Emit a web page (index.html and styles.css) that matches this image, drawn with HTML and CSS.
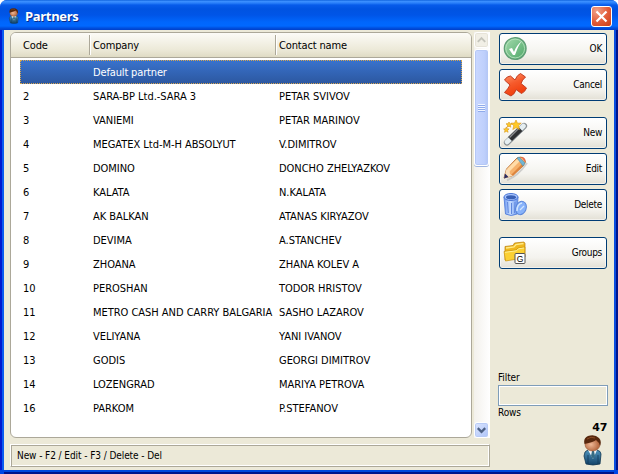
FILE: index.html
```html
<!DOCTYPE html>
<html lang="en">
<head>
<meta charset="utf-8">
<title>Partners</title>
<link rel="stylesheet" href="styles.css">
</head>
<body>
<svg width="0" height="0" class="defs">
  <defs>
    <linearGradient id="suit" x2="0" y2="1"><stop stop-color="#4f94bd"/><stop offset="1" stop-color="#124268"/></linearGradient>
    <radialGradient id="skin" cx=".4" cy=".5"><stop stop-color="#efb896"/><stop offset="1" stop-color="#b96d45"/></radialGradient>
    <symbol id="person" viewBox="0 0 22 31">
      <path d="M3 17 Q5 15 7 15 L15 15 Q19 16 19 19 L18 29 Q11 31 4 29 L2 21Z" fill="url(#suit)" stroke="#123650" stroke-width=".8"/>
      <path d="M6 15 L11 24 L15 15Z" fill="#f4f6f7"/>
      <path d="M10 16h2l1 5-2 3-2-3Z" fill="#356b84"/>
      <path d="M6 20v9M16 20v9" stroke="#0d3554" stroke-width=".7"/>
      <ellipse cx="10.5" cy="9.500" rx="7.500" ry="6.5" fill="url(#skin)" stroke="#8d4d2d" stroke-width=".5"/>
      <path d="M2.500 9 Q1 3 6 1 Q13 -1 17 3 Q20 6 18 11 Q17 7 14 5 Q12 7 2.500 9Z" fill="#57270d"/>
      <path d="M5 4 Q9 1 13 3" stroke="#8b4b24" fill="none"/>
    </symbol>
  </defs>
</svg>
<main class="window">
  <header class="titlebar">
    <svg class="app-icon" preserveAspectRatio="none"><use href="#person"/></svg>
    <h1>Partners</h1>
    <button class="close" aria-label="Close"><svg viewBox="0 0 19 19"><path d="M4.500 4.500l10 10M14.500 4.500l-10 10" stroke="#fff" stroke-width="2.2"/></svg></button>
  </header>
  <div class="client">
    <section class="left">
      <div class="list">
        <div class="table">
          <div class="row head"><span>Code</span><span>Company</span><span>Contact name</span></div>
          <div class="row selected"><span></span><span>Default partner</span><span></span></div>
          <div class="row"><span>2</span><span>SARA-BP Ltd.-SARA 3</span><span>PETAR SVIVOV</span></div>
          <div class="row"><span>3</span><span>VANIEMI</span><span>PETAR MARINOV</span></div>
          <div class="row"><span>4</span><span>MEGATEX Ltd-M-H ABSOLYUT</span><span>V.DIMITROV</span></div>
          <div class="row"><span>5</span><span>DOMINO</span><span>DONCHO ZHELYAZKOV</span></div>
          <div class="row"><span>6</span><span>KALATA</span><span>N.KALATA</span></div>
          <div class="row"><span>7</span><span>AK BALKAN</span><span>ATANAS KIRYAZOV</span></div>
          <div class="row"><span>8</span><span>DEVIMA</span><span>A.STANCHEV</span></div>
          <div class="row"><span>9</span><span>ZHOANA</span><span>ZHANA KOLEV A</span></div>
          <div class="row"><span>10</span><span>PEROSHAN</span><span>TODOR HRISTOV</span></div>
          <div class="row"><span>11</span><span>METRO CASH AND CARRY BALGARIA</span><span>SASHO LAZAROV</span></div>
          <div class="row"><span>12</span><span>VELIYANA</span><span>YANI IVANOV</span></div>
          <div class="row"><span>13</span><span>GODIS</span><span>GEORGI DIMITROV</span></div>
          <div class="row"><span>14</span><span>LOZENGRAD</span><span>MARIYA PETROVA</span></div>
          <div class="row"><span>16</span><span>PARKOM</span><span>P.STEFANOV</span></div>
        </div>
        <div class="scrollbar">
          <div class="arrow disabled"><svg viewBox="0 0 14 14"><path d="M3 9l4-4 4 4" fill="none" stroke="#c4c4bb" stroke-width="2"/></svg></div>
          <div class="thumb"><i></i></div>
          <div class="arrow down"><svg viewBox="0 0 14 14"><path d="M3 5l4 4 4-4" fill="none" stroke="#4d6185" stroke-width="2.4"/></svg></div>
        </div>
      </div>
      <footer class="status">New - F2 / Edit - F3 / Delete - Del</footer>
    </section>
    <aside class="side">
      <button class="action">
        <svg viewBox="0 0 26 26">
          <defs><linearGradient id="ok" x2="1" y2="1"><stop stop-color="#a6dcae"/><stop offset="1" stop-color="#4ba566"/></linearGradient></defs>
          <circle cx="12.2" cy="12.500" r="10.9" fill="url(#ok)" stroke="#5f9d76" stroke-width="1.2"/>
          <circle cx="12.2" cy="12.500" r="9.4" fill="none" stroke="#b9e5bf" stroke-width=".8"/>
          <path d="M6 13l3-1 2 4c2-5 4-8 8-11-4 5-5 9-7 14h-2Z" fill="#fff"/>
        </svg><span>OK</span></button>
      <button class="action">
        <svg viewBox="0 0 26 26">
          <defs><linearGradient id="no" x2=".4" y2="1"><stop stop-color="#ff9a70"/><stop offset=".5" stop-color="#f65b2c"/><stop offset="1" stop-color="#f03c0b"/></linearGradient></defs>
          <path d="M1.500 8Q4 4 7.500 4L12 8Q14 3 17.500 1.500L22.500 5Q19 8 18 11.500L23.500 16Q22 20 18.500 21.500L13 17.500Q12 22 8 24L1.500 20.500Q5 17 7 13Z" fill="url(#no)" stroke="#c23e22" stroke-width="1" stroke-linejoin="round"/>
        </svg><span>Cancel</span></button>
      <button class="action gap">
        <svg viewBox="0 0 26 26">
          <path d="M4 22.500L21 6" stroke="#8a9094" stroke-width="6.2" stroke-linecap="round"/>
          <path d="M4 22L20.500 6" stroke="#e5eef1" stroke-width="4.6" stroke-linecap="round"/>
          <path d="M7 19L17.500 9" stroke="#2e3032" stroke-width="5.6"/>
          <path d="M6.500 17.500l9-9" stroke="#8b8d90" stroke-width="1.4"/>
          <g fill="#ffc928" stroke="#d99515" stroke-width=".6"><path d="M13 0l1.5 3.2 3.7-.1-2.7 2.6 1 3.8-3.4-1.9-3.3 2 1-3.9L8 3.2l3.5-.1Z"/><path d="M6 2l.9 1.7 2 .2-1.5 1.3.4 2L6 6.2l-1.8 1 .4-2L3 3.8l2-.1Z"/><path d="M3.3 7l.8 1.8 2 .1-1.5 1.4.5 2-1.8-1-1.8 1 .5-2L.6 9l1.9-.2Z"/></g>
        </svg><span>New</span></button>
      <button class="action">
        <svg viewBox="0 0 26 26">
          <path d="M4 24Q14 21 24 7" stroke="#aaa" stroke-width="2" fill="none" opacity=".5"/>
          <path d="M1 22L3.500 13 14 2Q21-1 22.500 6L20 10 9 20Z" fill="#f6b16b" stroke="#b86b2d" stroke-width=".9"/>
          <path d="M4 13L14 3l3 2L6 16Z" fill="#ffdca9"/>
          <path d="M8 19L19 8l2 1L10 20Z" fill="#dd853f"/>
          <path d="M14 2l2-1 6 6-2 3Z" fill="#6fb6d7" stroke="#4f8ead" stroke-width=".5"/>
          <path d="M18.500 1Q21.500 1 22.500 4L22 6Z" fill="#e96950"/>
          <path d="M1 22l2.500-9 3 2 .5 3 3 2Z" fill="#f9dfbd"/>
          <path d="M1 22.500l1-5 3.500 3.500Z" fill="#292b62"/>
        </svg><span>Edit</span></button>
      <button class="action">
        <svg viewBox="0 0 26 26">
          <defs><linearGradient id="bin"><stop stop-color="#6d98f0"/><stop offset=".45" stop-color="#c4dbff"/><stop offset="1" stop-color="#6492ec"/></linearGradient></defs>
          <path d="M1 5l1.500 17Q8 25 14 22l1-17Z" fill="url(#bin)" stroke="#5d86dc"/>
          <path d="M4.500 10l.8 11M8.500 11v11M12 10L11.500 21" stroke="#6088de"/>
          <ellipse cx="8" cy="5" rx="7" ry="3.500" fill="#a9c6ff" stroke="#4b76d5"/>
          <ellipse cx="8" cy="5.200" rx="5" ry="2" fill="#3960b5"/>
          <ellipse cx="18" cy="16" rx="5.200" ry="6.800" transform="rotate(20 18 16)" fill="#87b2fa" stroke="#5b86d9"/>
          <path d="M14 19q0-7 5-8" stroke="#d1e5ff" stroke-width="1.500" fill="none"/><path d="M17 18l4-4" stroke="#d1e5ff" stroke-width="1.200"/>
        </svg><span>Delete</span></button>
      <button class="action gap">
        <svg viewBox="0 0 26 26">
          <path d="M2 6.500L10 5.500l1.500-2.500L21 2l1 1.500V17L2 20Z" fill="#f0b81d" stroke="#b87d09" stroke-width=".7"/>
          <path d="M3 8l8-1 2-2.500 7.500-1" stroke="#ffeb88" stroke-width="1.300" fill="none"/>
          <path d="M1 11.500l12-1.500 2-2 7-1-.5 11L2.500 21Z" fill="#fbd034" stroke="#c8920f" stroke-width=".7"/>
          <path d="M2 12.300l11.500-1.500 2-2 5.500-.8" stroke="#fff097" fill="none"/>
          <rect x="12" y="13.500" width="10" height="10" rx="1" fill="#fff" stroke="#555"/>
          <text x="17" y="21.500" text-anchor="middle" class="g">G</text>
        </svg><span>Groups</span></button>
      <div class="filter">
        <label for="f">Filter</label>
        <input id="f">
        <div class="rows">Rows</div>
        <b>47</b>
        <svg class="user"><use href="#person"/></svg>
      </div>
    </aside>
  </div>
</main>
</body>
</html>
```
FILE: styles.css
```css
* { box-sizing: border-box; }
body { margin: 0; background: #fff; font: 11px/14px "DejaVu Sans Condensed", "DejaVu Sans", sans-serif; color: #000; }
button { font: inherit; color: inherit; }
.defs { position: absolute; }
.window { width: 618px; height: 474px; display: flex; flex-direction: column; border-radius: 7px 7px 0 0; overflow: hidden; background: #0046e5; }
.titlebar { height: 30px; flex: none; display: flex; align-items: center; padding: 2px 6px 0 8px; background: linear-gradient(#0053d4 0, #3f93ff 1px, #2a80fa 3px, #075bea 5px, #0053e1 9px, #0055e7 15px, #0066fc 22px, #0068ff 26px, #0050df 28px, #003fc9 30px); }
.app-icon { width: 12px; height: 16px; margin-top: -1px; }
h1 { font: bold 13px/18px "Open Sans", "Noto Sans", sans-serif; letter-spacing: -.35px; margin: 0 auto 0 5px; color: #fff; text-shadow: 1px 1px 0 #0a2d8d; }
.close { width: 21px; height: 21px; padding: 0; border: 1px solid #fff; border-radius: 3px; background: radial-gradient(circle at 25% 20%, #f0a188, #e25b37 55%, #c83e18); }
.close svg { display: block; width: 19px; height: 19px; }
.client { flex: 1; display: flex; gap: 8px; padding: 2px 6px 3px 6px; margin: 0 4px 4px; background: #ece9d8; box-shadow: -2px 0 #0b5bf0, 2px 0 #0b4cde, -4px 0 #0019cf, 4px 0 #00138c, 0 2px #0046dc, 0 4px #00138c; }
.left { width: 480px; display: flex; flex-direction: column; gap: 6px; }
.list { height: 406px; display: flex; gap: 2px; }
.table { width: 462px; border: 1px solid #aca899; border-radius: 6px; background: #fff; overflow: hidden; }
.row { height: 24px; display: grid; grid-template-columns: 69px 186px 1fr; align-items: center; margin: 0 9px; white-space: nowrap; letter-spacing: -.03px; }
.row span { padding: 2px 0 0 4px; }
.row span:first-child { padding-left: 3px; }
.head { height: 25px; margin: 0 0 2px; padding-left: 9px; border-bottom: 1px solid #aca899; background: linear-gradient(#fcfbf7, #ece9d8 70%, #dfdbc4); letter-spacing: -.15px; }
.head span { height: 20px; line-height: 20px; border-left: 1px solid #aca899; box-shadow: inset 1px 0 #fff; padding: 1px 0 0 3px; }
.head span:first-child { border: 0; box-shadow: none; }
.selected { color: #fff; background: linear-gradient(#3973ce, #2c579f); outline: 1px dotted #d6a550; outline-offset: -1px; letter-spacing: -.15px; }
.scrollbar { width: 16px; display: flex; flex-direction: column; gap: 1px; background: linear-gradient(90deg, #f3f1ec, #fff); }
.arrow { width: 15px; height: 16px; border: 1px solid #fff; border-radius: 3px; background: linear-gradient(135deg, #dce6ff, #aec4f8); box-shadow: inset 0 0 0 1px #b8cbf6; flex: none; }
.arrow svg { display: block; width: 13px; height: 14px; }
.disabled { background: #f1efe6; box-shadow: inset 0 0 0 1px #e6e3d9; }
.thumb { width: 15px; height: 117px; display: grid; place-items: center; border: 1px solid #fff; border-radius: 3px; background: linear-gradient(90deg, #cad8ff, #bfd0fc 70%, #b3c6f6); box-shadow: inset 0 0 0 1px #b5c8f6, 0 1px #a0b5e0; }
.thumb i { width: 7px; height: 8px; background: repeating-linear-gradient(#f2f6ff 0 1px, #8fabeb 1px 2px); }
.down { margin-top: auto; }
.status { height: 23px; padding: 3px 6px; line-height: 16px; font-size: 10px; letter-spacing: -.08px; border: 1px solid #fff; border-right-color: #aca899; border-bottom-color: #aca899; box-shadow: inset 1px 1px #aca899, inset -1px -1px #fff; }
.side { width: 111px; display: flex; flex-direction: column; padding-top: 1px; }
.action { width: 108px; height: 32px; margin: 0 0 4px 1px; padding: 0 4px 0 3px; display: flex; align-items: center; justify-content: space-between; flex: none; border: 1px solid #003c74; border-radius: 3px; background: linear-gradient(#fff, #f4f3ee 65%, #e3e0d5); box-shadow: inset 0 0 0 1px #fff8; font-size: 10px; letter-spacing: -.3px; }
.action.gap { margin-top: 12px; }
.action svg { width: 26px; height: 26px; }
.g { font: 8.5px "Liberation Sans", sans-serif; letter-spacing: 0; }
.filter { margin-top: auto; display: flex; flex-direction: column; font-size: 10px; letter-spacing: -.1px; }
.filter input { width: 110px; height: 21px; margin: 0; border: 1px solid #7f9db9; background: #ece9d8; box-shadow: inset 0 0 0 1px #fff; }
.rows { height: 15px; }
.filter b { align-self: flex-end; margin-right: 1px; font: bold 11px/14px "DejaVu Sans", sans-serif; letter-spacing: -.3px; }
.user { width: 22px; height: 31px; align-self: flex-end; margin: 0 4px 1px 0; }
```
